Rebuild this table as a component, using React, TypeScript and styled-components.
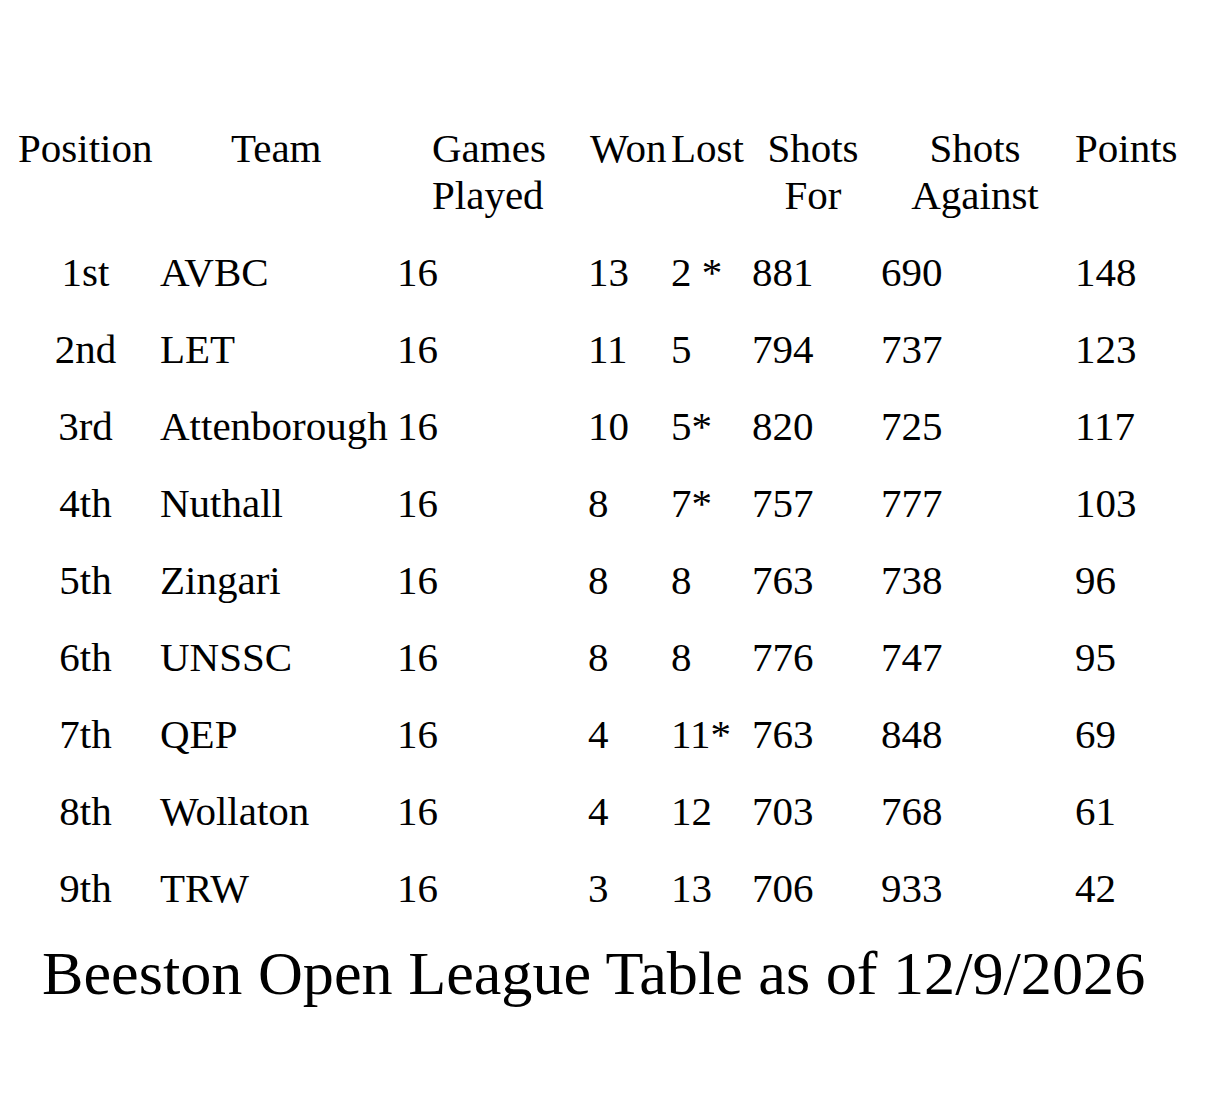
import React from "react"
import styled, { createGlobalStyle } from "styled-components"

const GlobalStyle = createGlobalStyle`
  html, body {
    margin: 0;
    padding: 0;
    background: #ffffff;
  }
  body {
    font-family: "Liberation Serif", "Times New Roman", serif;
    color: #000000;
  }
`

const COLUMNS = "142px 237px 191px 83px 81px 129px 194px 120px"

const Page = styled.div`
  width: 1207px;
  height: 1093px;
  padding: 125px 0 0 18px;
  box-sizing: border-box;
  overflow: hidden;
`

const HeaderRow = styled.div`
  display: grid;
  grid-template-columns: ${COLUMNS};
  font-size: 41px;
  line-height: 47px;
  margin-bottom: 15px;
`

const HeadCell = styled.div<{ $align?: "left" | "center"; $pad?: number; $padRight?: number }>`
  text-align: ${(p) => p.$align ?? "left"};
  padding-left: ${(p) => p.$pad ?? 0}px;
  padding-right: ${(p) => p.$padRight ?? 0}px;
  white-space: nowrap;
`

const Row = styled.div`
  display: grid;
  grid-template-columns: ${COLUMNS};
  font-size: 41px;
  line-height: 77px;
`

const Cell = styled.div<{ $center?: boolean }>`
  text-align: ${(p) => (p.$center ? "center" : "left")};
  padding-right: ${(p) => (p.$center ? 7 : 0)}px;
  white-space: pre;
`

const Title = styled.div`
  font-size: 62.2px;
  line-height: 71px;
  margin: 11px 0 0 24px;
  white-space: nowrap;
`

type Team = {
  pos: string
  name: string
  played: number
  won: number
  lost: string
  shotsFor: number
  shotsAgainst: number
  points: number
}

const teams: Team[] = [
  { pos: "1st", name: "AVBC", played: 16, won: 13, lost: "2 *", shotsFor: 881, shotsAgainst: 690, points: 148 },
  { pos: "2nd", name: "LET", played: 16, won: 11, lost: "5", shotsFor: 794, shotsAgainst: 737, points: 123 },
  { pos: "3rd", name: "Attenborough", played: 16, won: 10, lost: "5*", shotsFor: 820, shotsAgainst: 725, points: 117 },
  { pos: "4th", name: "Nuthall", played: 16, won: 8, lost: "7*", shotsFor: 757, shotsAgainst: 777, points: 103 },
  { pos: "5th", name: "Zingari", played: 16, won: 8, lost: "8", shotsFor: 763, shotsAgainst: 738, points: 96 },
  { pos: "6th", name: "UNSSC", played: 16, won: 8, lost: "8", shotsFor: 776, shotsAgainst: 747, points: 95 },
  { pos: "7th", name: "QEP", played: 16, won: 4, lost: "11*", shotsFor: 763, shotsAgainst: 848, points: 69 },
  { pos: "8th", name: "Wollaton", played: 16, won: 4, lost: "12", shotsFor: 703, shotsAgainst: 768, points: 61 },
  { pos: "9th", name: "TRW", played: 16, won: 3, lost: "13", shotsFor: 706, shotsAgainst: 933, points: 42 },
]

const App = () => {
  return (
    <>
      <GlobalStyle />
      <Page>
        <HeaderRow>
          <HeadCell>Position</HeadCell>
          <HeadCell $pad={71}>Team</HeadCell>
          <HeadCell $pad={35}>
            Games
            <br />
            Played
          </HeadCell>
          <HeadCell $pad={2}>Won</HeadCell>
          <HeadCell>Lost</HeadCell>
          <HeadCell $align="center" $padRight={7}>
            Shots
            <br />
            For
          </HeadCell>
          <HeadCell $align="center" $padRight={6}>
            Shots
            <br />
            Against
          </HeadCell>
          <HeadCell>Points</HeadCell>
        </HeaderRow>
        {teams.map((t) => (
          <Row key={t.pos}>
            <Cell $center>{t.pos}</Cell>
            <Cell>{t.name}</Cell>
            <Cell>{t.played}</Cell>
            <Cell>{t.won}</Cell>
            <Cell>{t.lost}</Cell>
            <Cell>{t.shotsFor}</Cell>
            <Cell>{t.shotsAgainst}</Cell>
            <Cell>{t.points}</Cell>
          </Row>
        ))}
        <Title>Beeston Open League Table as of 12/9/2026</Title>
      </Page>
    </>
  )
}

export default App
